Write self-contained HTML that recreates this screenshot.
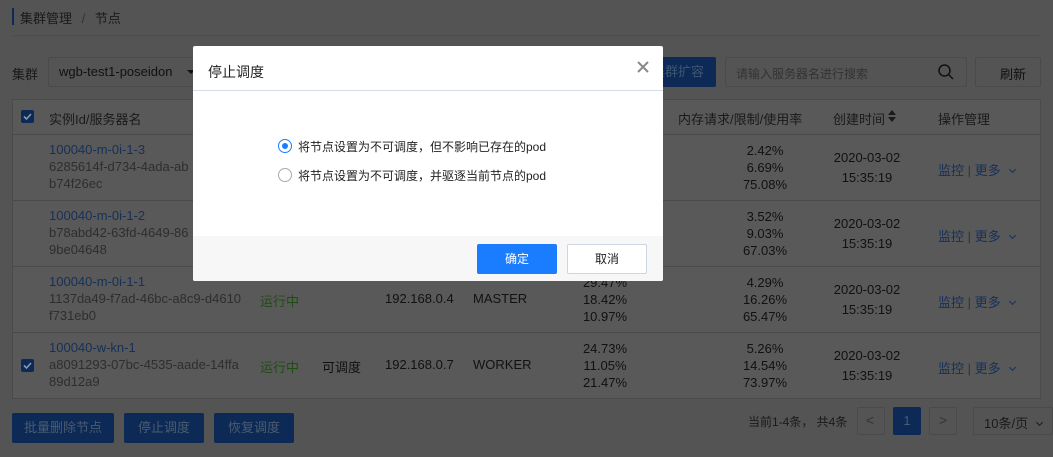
<!DOCTYPE html>
<html><head><meta charset="utf-8"><style>
*{margin:0;padding:0;box-sizing:border-box}
body{width:1053px;height:457px;overflow:hidden;background:#545454;font-family:"Liberation Sans","Noto Sans CJK SC",sans-serif;font-size:12px;color:#111;position:relative}
.a{position:absolute;white-space:nowrap}
.lk{color:#15305a}
.g{color:#2e2e2e}
.gr{color:#1f4d14}
.btn{position:absolute;background:#0c2a55;color:#4b5b70;border-radius:2px;text-align:center;font-size:13px}
.pct{position:absolute;text-align:center;line-height:17px;width:80px;font-size:13px}
.tc{position:absolute;text-align:center;line-height:20px;width:100px;font-size:13px}
.cb{position:absolute;width:13px;height:13px;border-radius:2px;background:#0c2a55}
.cb svg{position:absolute;left:1px;top:1px}
.ob{position:absolute;border:1px solid #4a4a4a;border-radius:2px}
.dn{display:inline-block;width:5px;height:5px;border-right:1px solid #15305a;border-bottom:1px solid #15305a;transform:rotate(45deg);margin-left:9px;position:relative;top:-3px}
</style></head><body>
<div class="a" style="left:12px;top:8px;width:2px;height:17px;background:#0c2a55"></div>
<div class="a" style="left:20px;top:8px;font-size:13px;color:#1a1a1a">集群管理 <span style="color:#333;margin:0 6px">/</span> 节点</div>
<div class="a" style="left:12px;top:35px;width:1029px;height:1px;background:#4d4d4d"></div>

<div class="a" style="left:12px;top:64px;font-size:13px;color:#1a1a1a">集群</div>
<div class="ob" style="left:48px;top:57px;width:160px;height:30px"></div>
<div class="a" style="left:59px;top:64px;font-size:13px;color:#111">wgb-test1-poseidon</div>
<div class="a" style="left:187px;top:70px;border:4px solid transparent;border-top:4px solid #111"></div>
<div class="btn" style="left:640px;top:57px;width:76px;height:30px;line-height:30px;color:#3f5673">集群扩容</div>
<div class="ob" style="left:725px;top:57px;width:242px;height:30px"></div>
<div class="a" style="left:736px;top:65px;color:#333;font-size:12px">请输入服务器名进行搜索</div>
<svg class="a" style="left:937px;top:63px" width="18" height="18" viewBox="0 0 18 18"><circle cx="7.5" cy="7.5" r="5.5" fill="none" stroke="#111" stroke-width="1.5"/><path d="M11.5 11.5L16 16" stroke="#111" stroke-width="1.5"/></svg>
<div class="ob" style="left:975px;top:57px;width:66px;height:30px"></div>
<div class="a" style="left:1000px;top:64px;font-size:13px;color:#111">刷新</div>

<div class="a" style="left:12px;top:99px;width:1029px;height:300px;background:#595959;border:1px solid #4a4a4a"></div>
<div class="a" style="left:12px;top:134px;width:1029px;height:1px;background:#4a4a4a"></div>
<div class="a" style="left:12px;top:200px;width:1029px;height:1px;background:#4a4a4a"></div>
<div class="a" style="left:12px;top:266px;width:1029px;height:1px;background:#4a4a4a"></div>
<div class="a" style="left:12px;top:332px;width:1029px;height:1px;background:#4a4a4a"></div>
<div class="cb" style="left:21px;top:110px"><svg width="11" height="11"><path d="M2 5.5l2.5 2.5 4.5-5" fill="none" stroke="#8a99ad" stroke-width="1.6"/></svg></div>
<div class="a" style="left:49px;top:109px;font-size:13px;color:#1a1a1a">实例Id/服务器名</div>
<div class="a" style="left:678px;top:109px;font-size:13px;color:#1a1a1a">内存请求/限制/使用率</div>
<div class="a" style="left:833px;top:109px;font-size:13px;color:#1a1a1a">创建时间</div>
<svg class="a" style="left:887px;top:108px" width="10" height="16"><path d="M1 7L5 2L9 7Z M1 9L5 14L9 9Z" fill="#1a1a1a"/></svg>
<div class="a" style="left:938px;top:109px;font-size:13px;color:#1a1a1a">操作管理</div>

<div class="a lk" style="left:49px;top:142px;font-size:13px">100040-m-0i-1-3</div>
<div class="a g" style="left:49px;top:159px;font-size:13px">6285614f-d734-4ada-ab</div>
<div class="a g" style="left:49px;top:176px;font-size:13px">b74f26ec</div>
<div class="pct" style="left:725px;top:142px">2.42%<br>6.69%<br>75.08%</div>
<div class="tc" style="left:817px;top:148px">2020-03-02<br>15:35:19</div>
<div class="a lk" style="left:938px;top:160px;font-size:13px">监控 <span style="color:#333">|</span> 更多<span class="dn"></span></div>

<div class="a lk" style="left:49px;top:208px;font-size:13px">100040-m-0i-1-2</div>
<div class="a g" style="left:49px;top:225px;font-size:13px">b78abd42-63fd-4649-86</div>
<div class="a g" style="left:49px;top:242px;font-size:13px">9be04648</div>
<div class="pct" style="left:725px;top:208px">3.52%<br>9.03%<br>67.03%</div>
<div class="tc" style="left:817px;top:214px">2020-03-02<br>15:35:19</div>
<div class="a lk" style="left:938px;top:226px;font-size:13px">监控 <span style="color:#333">|</span> 更多<span class="dn"></span></div>

<div class="a lk" style="left:49px;top:274px;font-size:13px">100040-m-0i-1-1</div>
<div class="a g" style="left:49px;top:291px;font-size:13px">1137da49-f7ad-46bc-a8c9-d4610</div>
<div class="a g" style="left:49px;top:308px;font-size:13px">f731eb0</div>
<div class="a gr" style="left:260px;top:291px;font-size:13px">运行中</div>
<div class="a" style="left:385px;top:291px;font-size:13px">192.168.0.4</div>
<div class="a" style="left:473px;top:291px;font-size:13px">MASTER</div>
<div class="pct" style="left:565px;top:274px">29.47%<br>18.42%<br>10.97%</div>
<div class="pct" style="left:725px;top:274px">4.29%<br>16.26%<br>65.47%</div>
<div class="tc" style="left:817px;top:280px">2020-03-02<br>15:35:19</div>
<div class="a lk" style="left:938px;top:292px;font-size:13px">监控 <span style="color:#333">|</span> 更多<span class="dn"></span></div>

<div class="cb" style="left:21px;top:359px"><svg width="11" height="11"><path d="M2 5.5l2.5 2.5 4.5-5" fill="none" stroke="#8a99ad" stroke-width="1.6"/></svg></div>
<div class="a lk" style="left:49px;top:340px;font-size:13px">100040-w-kn-1</div>
<div class="a g" style="left:49px;top:357px;font-size:13px">a8091293-07bc-4535-aade-14ffa</div>
<div class="a g" style="left:49px;top:374px;font-size:13px">89d12a9</div>
<div class="a gr" style="left:260px;top:357px;font-size:13px">运行中</div>
<div class="a" style="left:322px;top:357px;font-size:13px">可调度</div>
<div class="a" style="left:385px;top:357px;font-size:13px">192.168.0.7</div>
<div class="a" style="left:473px;top:357px;font-size:13px">WORKER</div>
<div class="pct" style="left:565px;top:340px">24.73%<br>11.05%<br>21.47%</div>
<div class="pct" style="left:725px;top:340px">5.26%<br>14.54%<br>73.97%</div>
<div class="tc" style="left:817px;top:346px">2020-03-02<br>15:35:19</div>
<div class="a lk" style="left:938px;top:358px;font-size:13px">监控 <span style="color:#333">|</span> 更多<span class="dn"></span></div>

<div class="btn" style="left:12px;top:413px;width:102px;height:30px;line-height:30px">批量删除节点</div>
<div class="btn" style="left:124px;top:413px;width:80px;height:30px;line-height:30px">停止调度</div>
<div class="btn" style="left:214px;top:413px;width:80px;height:30px;line-height:30px">恢复调度</div>

<div class="a" style="left:748px;top:413px;font-size:12px;color:#1a1a1a">当前1-4条， 共4条</div>
<div class="ob" style="left:857px;top:407px;width:28px;height:28px"></div>
<div class="a" style="left:866px;top:412px;font-size:14px;color:#333">&lt;</div>
<div class="a" style="left:893px;top:407px;width:28px;height:28px;background:#0c2a55;border-radius:2px;color:#4b5b70;text-align:center;line-height:28px;font-size:13px">1</div>
<div class="ob" style="left:929px;top:407px;width:28px;height:28px"></div>
<div class="a" style="left:939px;top:412px;font-size:14px;color:#333">&gt;</div>
<div class="ob" style="left:973px;top:407px;width:80px;height:28px"></div>
<div class="a" style="left:984px;top:413px;font-size:13px;color:#1a1a1a">10条/页<span class="dn" style="border-color:#1a1a1a"></span></div>

<div class="a" style="left:193px;top:46px;width:470px;height:235px;background:#fff;border-radius:2px;overflow:hidden">
  <div class="a" style="left:15px;top:16px;font-size:14px;color:#222">停止调度</div>
  <svg class="a" style="left:444px;top:15px" width="12" height="12"><path d="M1 1L11 11M11 1L1 11" stroke="#8a8a8a" stroke-width="2"/></svg>
  <div class="a" style="left:0;top:44px;width:470px;height:1px;background:#d5dce6"></div>
  <div class="a" style="left:85px;top:93px;width:14px;height:14px;border:1px solid #1a7cff;border-radius:50%"></div>
  <div class="a" style="left:89px;top:97px;width:6px;height:6px;background:#1a7cff;border-radius:50%"></div>
  <div class="a" style="left:105px;top:92px;font-size:12px;color:#222">将节点设置为不可调度，但不影响已存在的pod</div>
  <div class="a" style="left:85px;top:122px;width:14px;height:14px;border:1px solid #aaa;border-radius:50%"></div>
  <div class="a" style="left:105px;top:121px;font-size:12px;color:#222">将节点设置为不可调度，并驱逐当前节点的pod</div>
  <div class="a" style="left:0;top:190px;width:470px;height:45px;background:#f7f7f7"></div>
  <div class="a" style="left:284px;top:198px;width:80px;height:30px;background:#1a7cff;border-radius:2px;color:#fff;text-align:center;line-height:30px;font-size:12px">确定</div>
  <div class="a" style="left:374px;top:198px;width:80px;height:30px;background:#fff;border:1px solid #ccd5e0;border-radius:2px;color:#222;text-align:center;line-height:28px;font-size:12px">取消</div>
</div>
</body></html>
